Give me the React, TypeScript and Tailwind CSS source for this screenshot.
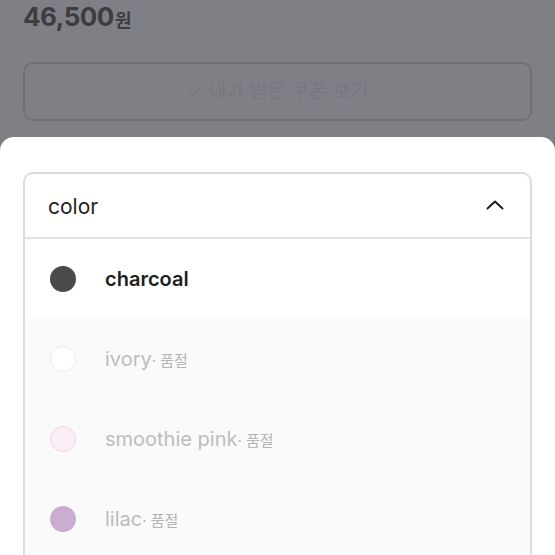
const OPTIONS = [
  { name: "charcoal", color: "bg-[#4a4a4c]", soldOut: false },
  { name: "ivory", color: "bg-white border border-[#ececec]", soldOut: true },
  { name: "smoothie pink", color: "bg-[#fbeef6] border border-[#ead9e4]", soldOut: true },
  { name: "lilac", color: "bg-[#c9aecf]", soldOut: true },
];

const FONT = "font-['Inter','Noto_Sans_CJK_KR',sans-serif]";

export default function App() {
  return (
    <div className={`flex h-[555px] w-[555px] flex-col overflow-hidden bg-[#7f8085] ${FONT}`}>
      <div className="px-[23px]">
        <div className="flex h-[36px] items-end pb-[6px] text-[#3c3d41]">
          <span className="text-[26px] font-bold leading-none tracking-[-0.5px]">46,500</span>
          <span className="ml-[1px] text-[18px] font-bold leading-none">원</span>
        </div>
        <button
          type="button"
          className="mt-[26px] flex h-[59px] w-full items-center justify-center gap-[6px] rounded-[10px] border-2 border-[#707176] text-[19.5px] text-[#78767e]"
        >
          <svg width="16" height="16" viewBox="0 0 16 16" fill="none" stroke="#77767c" strokeWidth="1.6">
            <path d="M2.5 8.5l3.5 3.5 7.5-8" />
          </svg>
          <span>
            내가 받은 <span className="text-[#7f7382]">쿠폰</span> 보기
          </span>
        </button>
      </div>

      <div className="mt-[16px] flex-1 rounded-t-[14px] bg-white px-[23px] pt-[35px]">
        <div className="overflow-hidden rounded-t-[10px] border-2 border-b-0 border-[#dcdcdc]">
          <div className="flex h-[65px] items-center justify-between border-b-2 border-[#e3e3e3] pb-[2px] pl-[23px] pr-[26px]">
            <span className="pt-[4px] text-[21px] text-[#222222]">color</span>
            <svg width="18" height="12" viewBox="0 0 18 12" fill="none" stroke="#1f1f1f" strokeWidth="2" strokeLinecap="round" strokeLinejoin="round">
              <path d="M1.5 9.5L9 2.5l7.5 7" />
            </svg>
          </div>
          {OPTIONS.map((o) => (
            <div
              key={o.name}
              className={`flex h-[80px] items-center pl-[25px] ${o.soldOut ? "bg-[#fafafa]" : "bg-white"}`}
            >
              <span className={`h-[26px] w-[26px] shrink-0 rounded-full ${o.color}`} />
              {o.soldOut ? (
                <span className="ml-[29px] flex items-baseline text-[20px] text-[#bdbdbd]">
                  {o.name}
                  <span className="text-[15px] text-[#b5b5b5]">· 품절</span>
                </span>
              ) : (
                <span className="ml-[29px] text-[20px] font-semibold text-[#1e1e1e]">{o.name}</span>
              )}
            </div>
          ))}
        </div>
      </div>
    </div>
  );
}
